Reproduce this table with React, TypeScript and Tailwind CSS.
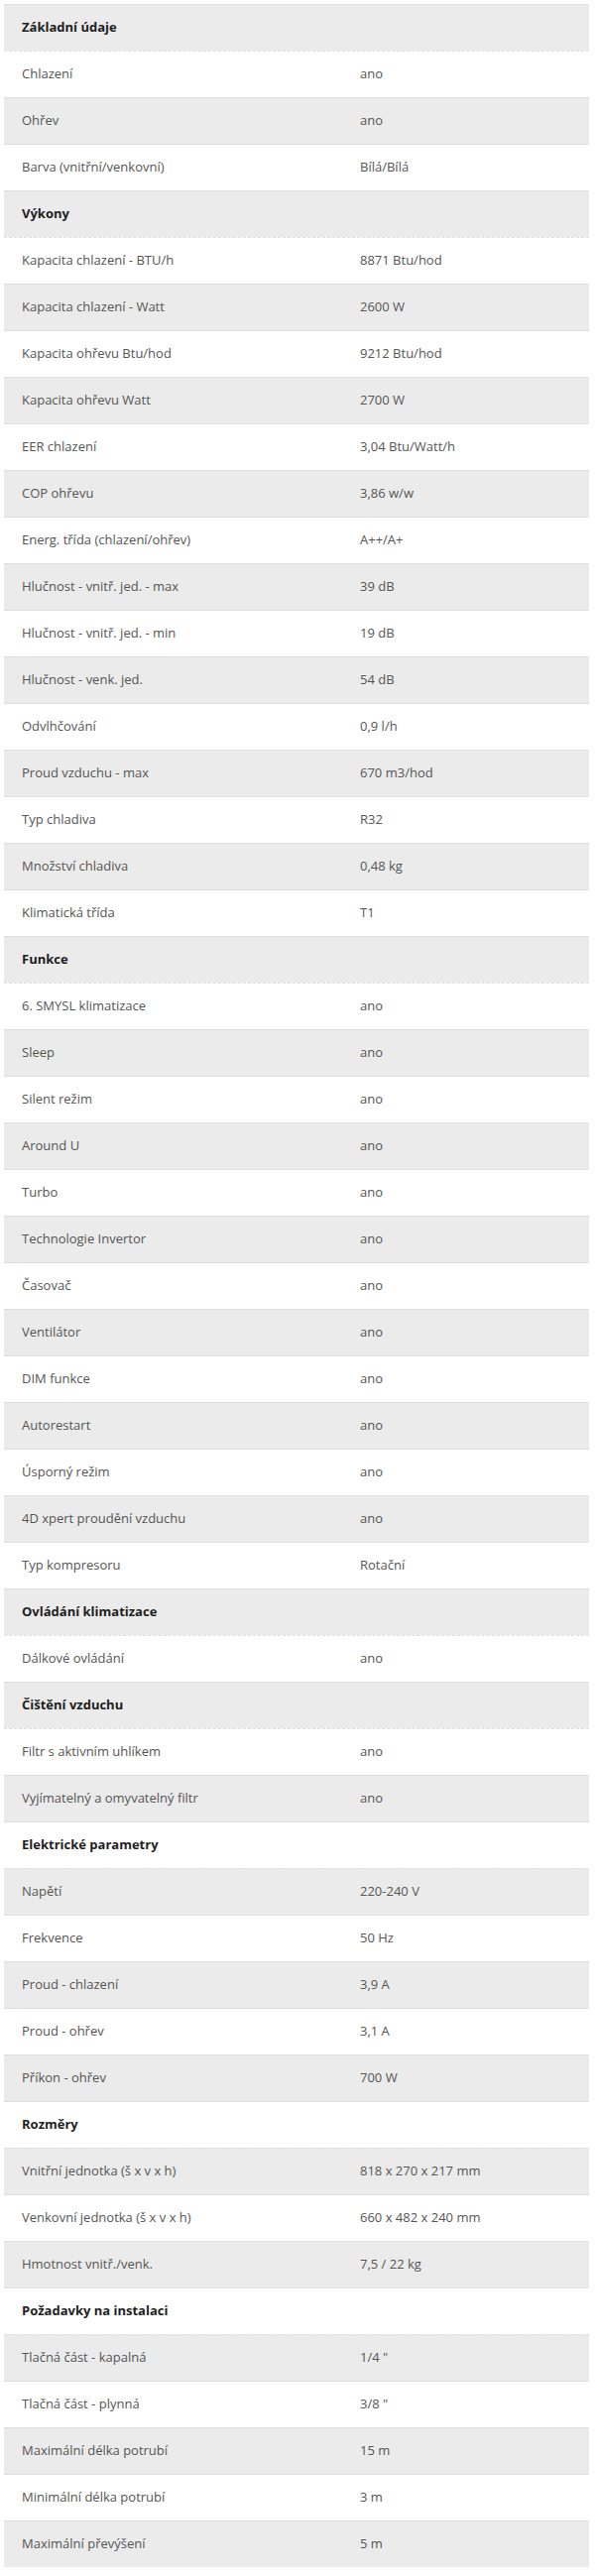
import React from 'react';

type Row = { label: string; value?: string; head?: boolean };

const rows: Row[] = [
  { label: 'Základní údaje', head: true },
  { label: 'Chlazení', value: 'ano' },
  { label: 'Ohřev', value: 'ano' },
  { label: 'Barva (vnitřní/venkovní)', value: 'Bílá/Bílá' },
  { label: 'Výkony', head: true },
  { label: 'Kapacita chlazení - BTU/h', value: '8871 Btu/hod' },
  { label: 'Kapacita chlazení - Watt', value: '2600 W' },
  { label: 'Kapacita ohřevu Btu/hod', value: '9212 Btu/hod' },
  { label: 'Kapacita ohřevu Watt', value: '2700 W' },
  { label: 'EER chlazení', value: '3,04 Btu/Watt/h' },
  { label: 'COP ohřevu', value: '3,86 w/w' },
  { label: 'Energ. třída (chlazení/ohřev)', value: 'A++/A+' },
  { label: 'Hlučnost - vnitř. jed. - max', value: '39 dB' },
  { label: 'Hlučnost - vnitř. jed. - min', value: '19 dB' },
  { label: 'Hlučnost - venk. jed.', value: '54 dB' },
  { label: 'Odvlhčování', value: '0,9 l/h' },
  { label: 'Proud vzduchu - max', value: '670 m3/hod' },
  { label: 'Typ chladiva', value: 'R32' },
  { label: 'Množství chladiva', value: '0,48 kg' },
  { label: 'Klimatická třída', value: 'T1' },
  { label: 'Funkce', head: true },
  { label: '6. SMYSL klimatizace', value: 'ano' },
  { label: 'Sleep', value: 'ano' },
  { label: 'Silent režim', value: 'ano' },
  { label: 'Around U', value: 'ano' },
  { label: 'Turbo', value: 'ano' },
  { label: 'Technologie Invertor', value: 'ano' },
  { label: 'Časovač', value: 'ano' },
  { label: 'Ventilátor', value: 'ano' },
  { label: 'DIM funkce', value: 'ano' },
  { label: 'Autorestart', value: 'ano' },
  { label: 'Úsporný režim', value: 'ano' },
  { label: '4D xpert proudění vzduchu', value: 'ano' },
  { label: 'Typ kompresoru', value: 'Rotační' },
  { label: 'Ovládání klimatizace', head: true },
  { label: 'Dálkové ovládání', value: 'ano' },
  { label: 'Čištění vzduchu', head: true },
  { label: 'Filtr s aktivním uhlíkem', value: 'ano' },
  { label: 'Vyjímatelný a omyvatelný filtr', value: 'ano' },
  { label: 'Elektrické parametry', head: true },
  { label: 'Napětí', value: '220-240 V' },
  { label: 'Frekvence', value: '50 Hz' },
  { label: 'Proud - chlazení', value: '3,9 A' },
  { label: 'Proud - ohřev', value: '3,1 A' },
  { label: 'Příkon - ohřev', value: '700 W' },
  { label: 'Rozměry', head: true },
  { label: 'Vnitřní jednotka (š x v x h)', value: '818 x 270 x 217 mm' },
  { label: 'Venkovní jednotka (š x v x h)', value: '660 x 482 x 240 mm' },
  { label: 'Hmotnost vnitř./venk.', value: '7,5 / 22 kg' },
  { label: 'Požadavky na instalaci', head: true },
  { label: 'Tlačná část - kapalná', value: '1/4 "' },
  { label: 'Tlačná část - plynná', value: '3/8 "' },
  { label: 'Maximální délka potrubí', value: '15 m' },
  { label: 'Minimální délka potrubí', value: '3 m' },
  { label: 'Maximální převýšení', value: '5 m' },
];

export default function App() {
  return (
    <div className="min-h-[2598px] bg-white pt-[4px] pl-[4px] font-['Open_Sans',sans-serif] text-[13px]">
      <div className="flex w-[590px] flex-col">
        {rows.map((row, i) => {
          const afterHead = i > 0 && rows[i - 1].head;
          return (
            <div
              key={i}
              className={`flex h-[47px] items-center border-t border-[#dedede] ${
                afterHead ? 'border-dashed' : 'border-solid'
              } ${i % 2 === 0 ? 'bg-[#ebebeb]' : 'bg-white'}`}
            >
              {row.head ? (
                <div className="pl-[18px] font-bold text-[#1e1e1e]">{row.label}</div>
              ) : (
                <>
                  <div className="w-[341px] shrink-0 pl-[18px] text-[#555555]">{row.label}</div>
                  <div className="pl-[18px] text-[#555555]">{row.value}</div>
                </>
              )}
            </div>
          );
        })}
      </div>
    </div>
  );
}
